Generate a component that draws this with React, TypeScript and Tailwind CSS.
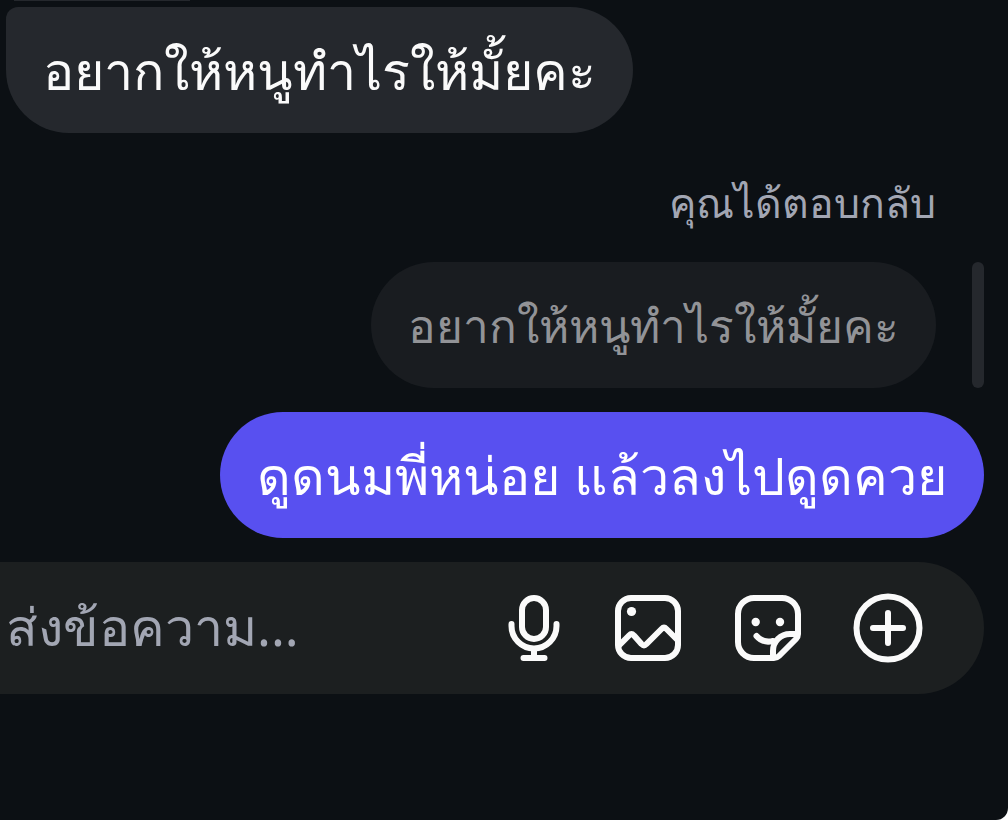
import React from 'react';

interface IconButtonProps {
  label: string;
  children: React.ReactNode;
}

const IconButton: React.FC<IconButtonProps> = ({ label, children }) => {
  return (
    <button type="button" aria-label={label} className="size-[72px] shrink-0 text-[#fafafa]">
      <svg viewBox="0 0 72 72" className="size-full" fill="none" stroke="currentColor" strokeWidth="6" strokeLinecap="round" strokeLinejoin="round">
        {children}
      </svg>
    </button>
  );
};

const Composer: React.FC = () => {
  return (
    <form className="mt-6 mr-6 flex h-[132px] items-center gap-10 rounded-r-full bg-[#1c1f20] pr-[60px] pl-1.5">
      <input
        type="text"
        aria-label="ส่งข้อความ"
        placeholder="ส่งข้อความ..."
        className="h-24 min-w-0 flex-1 bg-transparent pb-1.5 text-[52px] text-[#fafafa] outline-none placeholder:text-[#a2a6b3]"
      />
      <div className="flex gap-12">
        <IconButton label="บันทึกเสียง">
          <rect x="30" y="6" width="24" height="41" rx="12" />
          <path d="M19.500 32v2a22.500 22.500 0 0 0 45 0v-2M42 57v9M31.500 66h21" />
        </IconButton>
        <IconButton label="รูปภาพ">
          <rect x="6" y="6" width="60" height="60" rx="13" />
          <path d="M7 53.500 17 43.500q2.500-2.500 5 0l7.500 8.500q2.500 2.500 5 0l15-15q2.500-2.500 5 0L65 47.500" />
          <circle cx="19.500" cy="19.500" r="4.600" fill="currentColor" stroke="none" />
        </IconButton>
        <IconButton label="สติกเกอร์">
          <path d="M66 42V22A16 16 0 0 0 50 6H22A16 16 0 0 0 6 22v28a16 16 0 0 0 16 16h20q3 0 5-2l17-17q2-2 2-5H58a17 17 0 0 0-17 17v6" />
          <path d="M24.500 44q6.500 7.500 16.500 5" />
          <circle cx="23.700" cy="30" r="4.200" fill="currentColor" stroke="none" />
          <circle cx="48" cy="30" r="4.200" fill="currentColor" stroke="none" />
        </IconButton>
        <IconButton label="เพิ่มเติม">
          <circle cx="36" cy="36" r="31.500" />
          <path d="M36 21v30M21 36h30" />
        </IconButton>
      </div>
    </form>
  );
};

const App: React.FC = () => {
  return (
    <div className="min-h-screen bg-white font-['Noto_Sans','Liberation_Sans',sans-serif]" lang="th">
      <main className="flex min-h-screen flex-col rounded-br-xl bg-[#0c1014]">
        <div className="ml-3.5 h-px w-44 bg-[#25282d]" />
        <div className="mt-1.5 ml-1.5 flex h-[126px] items-center self-start rounded-[63px] rounded-tl-xl bg-[#25282d] px-[37px] text-[52px] whitespace-nowrap text-[#fafafa]">
          อยากให้หนูทำไรให้มั้ยคะ
        </div>
        <div className="mr-6 flex flex-col items-end">
          <p className="mt-[37px] mr-12 text-[41px] leading-16 whitespace-nowrap text-[#a2a6b3]">คุณได้ตอบกลับ</p>
          <div className="mt-7 flex gap-9">
            <div className="flex h-[126px] items-center rounded-full bg-[#191c20] px-[37px] text-[46px] whitespace-nowrap text-[#929397]">
              อยากให้หนูทำไรให้มั้ยคะ
            </div>
            <div className="w-3 rounded-full bg-[#25282d]" />
          </div>
          <div className="mt-6 flex h-[126px] items-center rounded-full bg-[#5850f0] px-[37px] text-[52px] whitespace-nowrap text-white">
            ดูดนมพี่หน่อย แล้วลงไปดูดควย
          </div>
        </div>
        <Composer />
      </main>
    </div>
  );
};

export default App;
